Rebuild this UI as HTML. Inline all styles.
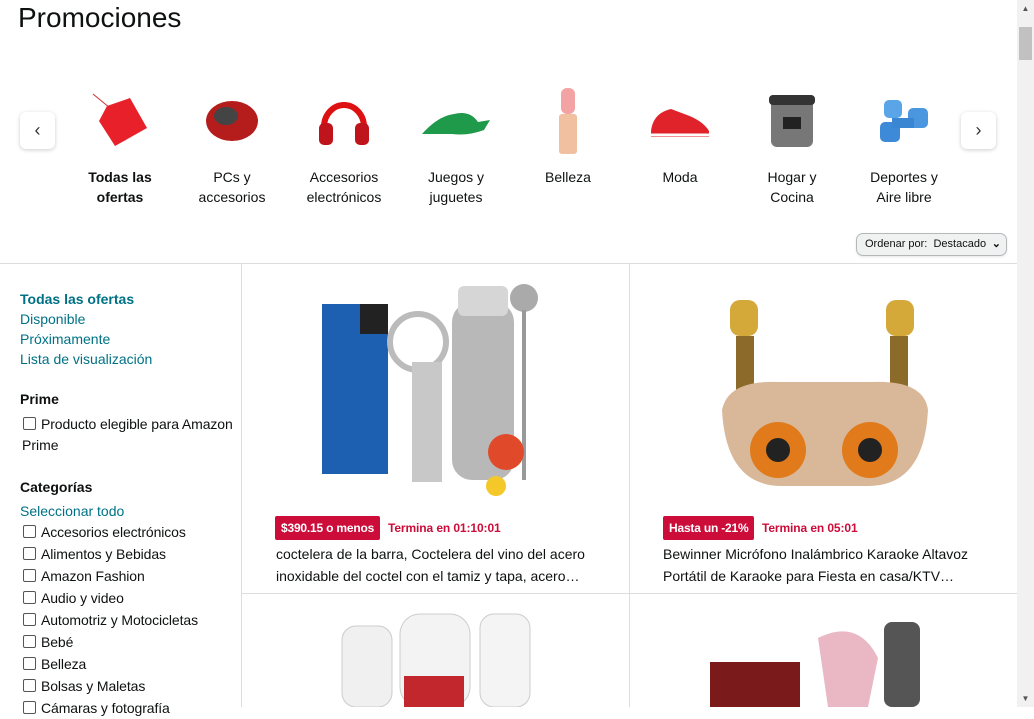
<!DOCTYPE html>
<html><head><meta charset="utf-8"><style>
*{margin:0;padding:0;box-sizing:border-box}
body{width:1034px;height:707px;overflow:hidden;background:#fff;font-family:"Liberation Sans",Arial,sans-serif;color:#0f1111;position:relative}
h1{position:absolute;left:18px;top:2px;font-size:28px;font-weight:400;color:#0f1111}
.nav{position:absolute;top:112px;width:35px;height:37px;background:#fff;border-radius:6px;box-shadow:0 1px 4px rgba(0,0,0,.2);text-align:center;line-height:36px;font-size:18px;color:#333}
.cat{position:absolute;top:81px;width:112px;text-align:center;font-size:14px;line-height:20px;color:#0f1111}
.cat .im{height:80px;display:flex;align-items:center;justify-content:center;margin-bottom:6px}
.sort{position:absolute;left:856px;top:233px;width:151px;height:23px;border:1px solid #b5b8bb;border-radius:7px;background:#f0f2f2;font-size:11px;line-height:21px;padding-left:8px;color:#0f1111;box-shadow:0 1px 2px rgba(0,0,0,.1)}
.hr{position:absolute;background:#ddd}
.side{position:absolute;left:20px;top:289px;font-size:14px;line-height:20px;width:225px}
.side a{color:#007185;display:block}
.side h4{font-size:14px;font-weight:700;margin:20px 0 4px}
.cb{display:flex;align-items:flex-start;line-height:22px;letter-spacing:-0.1px}
.cb i{display:inline-block;width:13px;height:13px;border:1px solid #555;border-radius:2px;margin:4px 5px 0 3px;flex:none}
.badge{position:absolute;top:516px;height:24px;background:#cc0c39;color:#fff;font-size:12px;font-weight:700;line-height:24px;padding:0 6px;border-radius:2px;letter-spacing:-0.2px}
.term{position:absolute;top:521px;font-size:12px;font-weight:700;color:#cc0c39;letter-spacing:-0.1px}
.title{position:absolute;top:543px;font-size:14px;line-height:22px;color:#0f1111;width:340px}
.sb{position:absolute;left:1017px;top:0;width:17px;height:707px;background:#f1f1f1}
</style></head><body>
<h1>Promociones</h1>
<div class="nav" style="left:20px">&#8249;</div>
<div class="nav" style="left:961px">&#8250;</div>

<div class="cat" style="left:64px"><div class="im"><svg width="70" height="70"><line x1="8" y1="8" x2="25" y2="22" stroke="#c33" stroke-width="1"/><polygon points="22,20 45,12 62,42 30,60 14,35" fill="#e8202a"/></svg></div><b>Todas las<br>ofertas</b></div>
<div class="cat" style="left:176px"><div class="im"><svg width="60" height="50"><ellipse cx="30" cy="25" rx="26" ry="20" fill="#b51c1c"/><ellipse cx="24" cy="20" rx="12" ry="9" fill="#444"/></svg></div>PCs y<br>accesorios</div>
<div class="cat" style="left:288px"><div class="im"><svg width="60" height="60"><path d="M10 36 A20 22 0 0 1 50 36" stroke="#d11" stroke-width="6" fill="none"/><rect x="5" y="32" width="14" height="22" rx="5" fill="#c0141c"/><rect x="41" y="32" width="14" height="22" rx="5" fill="#c0141c"/></svg></div>Accesorios<br>electrónicos</div>
<div class="cat" style="left:400px"><div class="im"><svg width="76" height="50"><path d="M4 38 Q20 20 36 18 Q52 14 60 26 L72 24 L66 34 Q50 40 34 38 Z" fill="#1f9a4a"/></svg></div>Juegos y<br>juguetes</div>
<div class="cat" style="left:512px"><div class="im"><svg width="30" height="66"><rect x="8" y="0" width="14" height="26" rx="6" fill="#f3a3a3"/><rect x="6" y="26" width="18" height="40" rx="3" fill="#f0c0a0"/></svg></div>Belleza</div>
<div class="cat" style="left:624px"><div class="im"><svg width="66" height="40"><path d="M4 30 Q6 12 24 8 L40 14 Q56 20 62 30 L62 36 L4 36 Z" fill="#e0222a"/><path d="M4 34 L62 34" stroke="#fff" stroke-width="3"/></svg></div>Moda</div>
<div class="cat" style="left:736px"><div class="im"><svg width="54" height="60"><rect x="6" y="8" width="42" height="48" rx="6" fill="#777"/><rect x="4" y="4" width="46" height="10" rx="4" fill="#333"/><rect x="18" y="26" width="18" height="12" fill="#222"/></svg></div>Hogar y<br>Cocina</div>
<div class="cat" style="left:848px"><div class="im"><svg width="60" height="50"><rect x="6" y="26" width="20" height="20" rx="5" fill="#3d8ad8"/><rect x="34" y="12" width="20" height="20" rx="5" fill="#4a97e0"/><rect x="18" y="22" width="22" height="10" fill="#3a86d2"/><rect x="10" y="4" width="18" height="18" rx="5" fill="#5aa4e8"/></svg></div>Deportes y<br>Aire libre</div>

<div class="sort">Ordenar por:&nbsp; Destacado <span style="float:right;margin-right:5px;font-weight:700">&#8964;</span></div>

<div class="hr" style="left:0;top:263px;width:1017px;height:1px"></div>
<div class="hr" style="left:241px;top:263px;width:1px;height:444px"></div>
<div class="hr" style="left:629px;top:263px;width:1px;height:444px"></div>
<div class="hr" style="left:241px;top:593px;width:776px;height:1px"></div>

<div class="side">
<a style="font-weight:700">Todas las ofertas</a><a>Disponible</a><a>Próximamente</a><a>Lista de visualización</a>
<h4>Prime</h4>
<div class="cb"><i></i>Producto elegible para Amazon</div><div style="margin-left:2px">Prime</div>
<h4 style="margin-top:22px">Categorías</h4>
<a>Seleccionar todo</a>
<div class="cb"><i></i>Accesorios electrónicos</div>
<div class="cb"><i></i>Alimentos y Bebidas</div>
<div class="cb"><i></i>Amazon Fashion</div>
<div class="cb"><i></i>Audio y video</div>
<div class="cb"><i></i>Automotriz y Motocicletas</div>
<div class="cb"><i></i>Bebé</div>
<div class="cb"><i></i>Belleza</div>
<div class="cb"><i></i>Bolsas y Maletas</div>
<div class="cb"><i></i>Cámaras y fotografía</div>
</div>

<svg style="position:absolute;left:320px;top:282px" width="230" height="215">
<rect x="2" y="22" width="66" height="170" fill="#1d5fb0"/><rect x="40" y="22" width="28" height="30" fill="#222"/>
<rect x="132" y="20" width="62" height="178" rx="20" fill="#b8b8b8"/><rect x="138" y="4" width="50" height="30" rx="6" fill="#d6d6d6"/>
<circle cx="204" cy="16" r="14" fill="#aaa"/><rect x="202" y="28" width="4" height="170" fill="#999"/>
<circle cx="98" cy="60" r="28" fill="none" stroke="#bbb" stroke-width="6"/><rect x="92" y="80" width="30" height="120" fill="#c8c8c8"/>
<circle cx="186" cy="170" r="18" fill="#e04a2a"/><circle cx="176" cy="204" r="10" fill="#f5c82a"/>
</svg>
<svg style="position:absolute;left:718px;top:300px" width="214" height="195">
<rect x="12" y="0" width="28" height="36" rx="10" fill="#d4a93a"/><rect x="18" y="36" width="18" height="80" fill="#8b6a2a"/>
<rect x="168" y="0" width="28" height="36" rx="10" fill="#d4a93a"/><rect x="172" y="36" width="18" height="80" fill="#8b6a2a"/>
<path d="M4 110 Q10 80 60 82 L154 82 Q206 80 210 110 Q206 186 150 186 L64 186 Q8 186 4 110Z" fill="#d9b89a"/>
<circle cx="60" cy="150" r="28" fill="#e07a1a"/><circle cx="60" cy="150" r="12" fill="#222"/>
<circle cx="152" cy="150" r="28" fill="#e07a1a"/><circle cx="152" cy="150" r="12" fill="#222"/>
</svg>
<svg style="position:absolute;left:320px;top:606px" width="230" height="101">
<rect x="80" y="8" width="70" height="93" rx="20" fill="#f3f3f3" stroke="#ccc"/><rect x="84" y="70" width="60" height="31" fill="#c1272d"/>
<rect x="22" y="20" width="50" height="81" rx="14" fill="#f0f0f0" stroke="#ccc"/><rect x="160" y="8" width="50" height="93" rx="14" fill="#f4f4f4" stroke="#ccc"/>
</svg>
<svg style="position:absolute;left:708px;top:618px" width="230" height="89">
<rect x="2" y="44" width="90" height="45" fill="#7a1a1a"/><path d="M110 20 Q150 0 170 40 L160 89 L120 89Z" fill="#e9b8c4"/>
<rect x="176" y="4" width="36" height="85" rx="8" fill="#555"/>
</svg>

<div class="badge" style="left:275px">$390.15 o menos</div><div class="term" style="left:388px">Termina en 01:10:01</div>
<div class="title" style="left:276px">coctelera de la barra, Coctelera del vino del acero inoxidable del coctel con el tamiz y tapa, acero…</div>
<div class="badge" style="left:663px">Hasta un -21%</div><div class="term" style="left:762px">Termina en 05:01</div>
<div class="title" style="left:663px">Bewinner Micrófono Inalámbrico Karaoke Altavoz Portátil de Karaoke para Fiesta en casa/KTV…</div>

<div class="sb"><div style="position:absolute;top:0;left:0;width:17px;height:17px;text-align:center;font-size:8px;line-height:17px;color:#555">&#9650;</div>
<div style="position:absolute;top:27px;left:2px;width:13px;height:33px;background:#c1c1c1"></div>
<div style="position:absolute;bottom:0;left:0;width:17px;height:17px;text-align:center;font-size:8px;line-height:17px;color:#555">&#9660;</div></div>
</body></html>
